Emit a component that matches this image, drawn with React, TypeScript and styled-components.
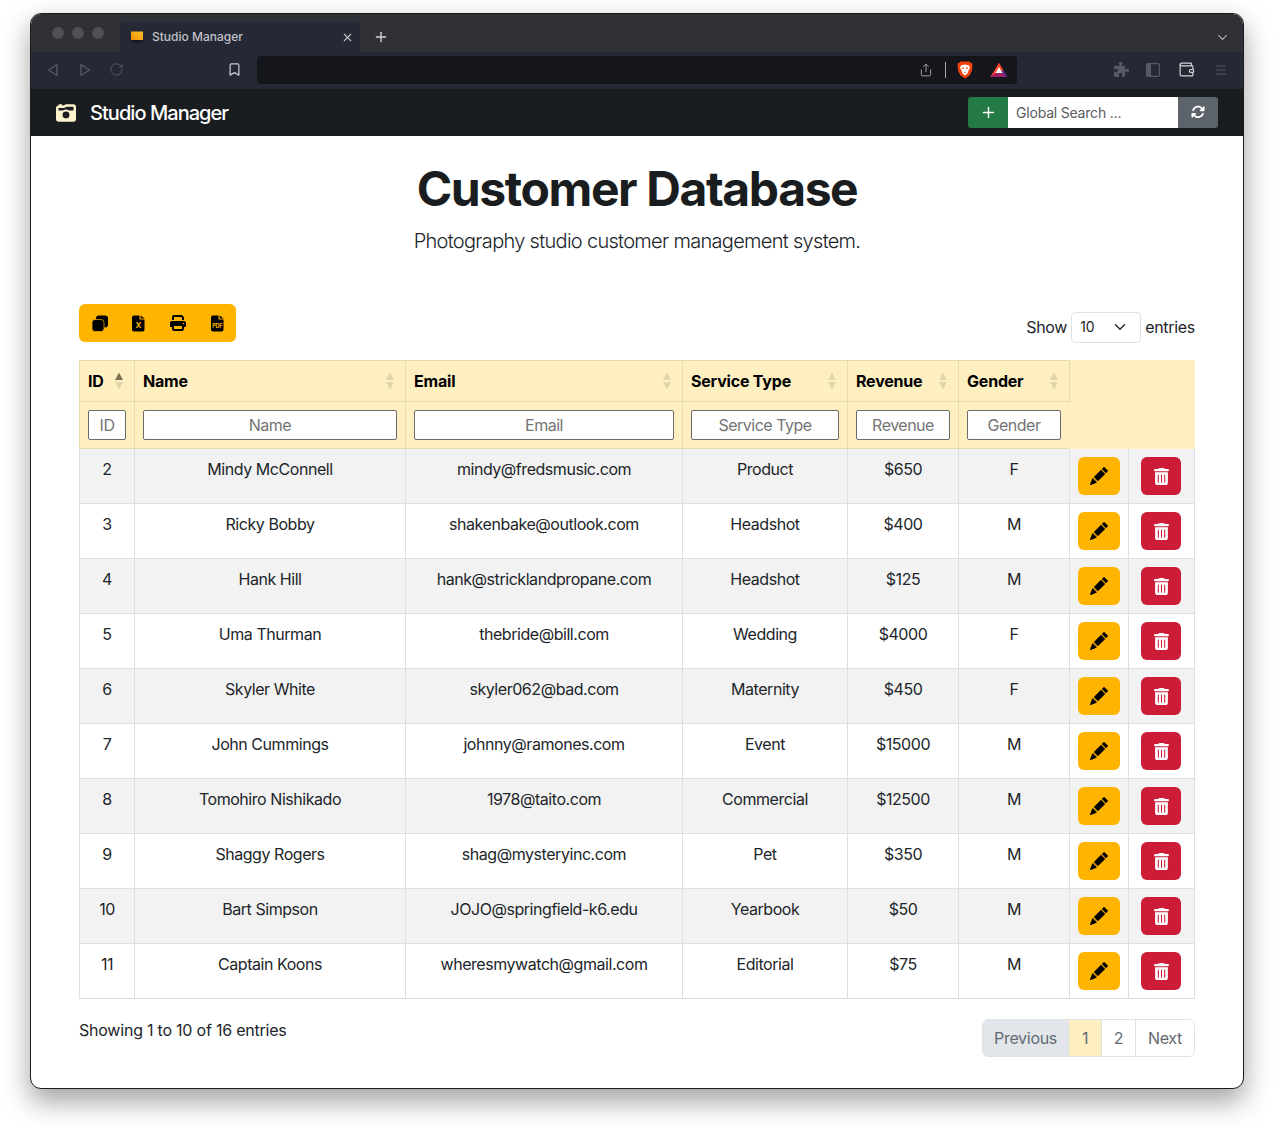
import React from 'react';
import styled, { createGlobalStyle } from 'styled-components';
import { FaArrowsRotate, FaCameraRetro, FaPrint, FaPuzzlePiece, FaTrashCan } from 'react-icons/fa6';
import { BsPencilFill } from 'react-icons/bs';
import { Bookmark, ChevronDown, Menu, Plus, RotateCw, Share, Wallet, X } from 'lucide-react';

type Customer = { id: number; name: string; email: string; service: string; revenue: string; gender: string };

const customers: Customer[] = [
  { id: 2, name: 'Mindy McConnell', email: 'mindy@fredsmusic.com', service: 'Product', revenue: '$650', gender: 'F' },
  { id: 3, name: 'Ricky Bobby', email: 'shakenbake@outlook.com', service: 'Headshot', revenue: '$400', gender: 'M' },
  { id: 4, name: 'Hank Hill', email: 'hank@stricklandpropane.com', service: 'Headshot', revenue: '$125', gender: 'M' },
  { id: 5, name: 'Uma Thurman', email: 'thebride@bill.com', service: 'Wedding', revenue: '$4000', gender: 'F' },
  { id: 6, name: 'Skyler White', email: 'skyler062@bad.com', service: 'Maternity', revenue: '$450', gender: 'F' },
  { id: 7, name: 'John Cummings', email: 'johnny@ramones.com', service: 'Event', revenue: '$15000', gender: 'M' },
  { id: 8, name: 'Tomohiro Nishikado', email: '1978@taito.com', service: 'Commercial', revenue: '$12500', gender: 'M' },
  { id: 9, name: 'Shaggy Rogers', email: 'shag@mysteryinc.com', service: 'Pet', revenue: '$350', gender: 'M' },
  { id: 10, name: 'Bart Simpson', email: 'JOJO@springfield-k6.edu', service: 'Yearbook', revenue: '$50', gender: 'M' },
  { id: 11, name: 'Captain Koons', email: 'wheresmywatch@gmail.com', service: 'Editorial', revenue: '$75', gender: 'M' },
];

const columns = [
  { label: 'ID', width: 55, active: true },
  { label: 'Name', width: 271 },
  { label: 'Email', width: 277 },
  { label: 'Service Type', width: 165 },
  { label: 'Revenue', width: 111 },
  { label: 'Gender', width: 111 },
];

const AMBER = '#ffb400';

const GlobalStyle = createGlobalStyle`
  html, body {
    margin: 0;
    background: #fff;
    font-family: Inter, "Liberation Sans", sans-serif;
    font-size: 16px;
    line-height: 24px;
    letter-spacing: -0.45px;
    color: #212529;
  }
`;

const Page = styled.div`
  height: 1129px;
  box-sizing: border-box;
  padding: 13px 30px 0;
  overflow: hidden;
`;

const Window = styled.div`
  height: 1076px;
  box-sizing: border-box;
  border: 1px solid #1c1c1e;
  border-radius: 11px;
  overflow: hidden;
  background: #fff;
  box-shadow: 0 12px 28px rgba(0, 0, 0, 0.38);
`;

const TabStrip = styled.div`
  height: 38px;
  background: #303136;
  display: flex;
  align-items: flex-end;
  padding-left: 21px;
`;

const Lights = styled.div`
  display: flex;
  gap: 8px;
  align-self: flex-start;
  margin-top: 13px;
  width: 68px;
`;

const Light = styled.span`
  width: 12px;
  height: 12px;
  border-radius: 50%;
  background: #505054;
`;

const Tab = styled.div`
  width: 240px;
  height: 30px;
  box-sizing: border-box;
  background: #252835;
  border-radius: 5px 5px 0 0;
  display: flex;
  align-items: center;
  padding: 0 6px 0 10px;
  color: #c0c1c6;
  font-size: 12px;
  font-weight: 500;
  letter-spacing: 0;
`;

const TabTitle = styled.span`
  flex: 1;
  margin-left: 8px;
`;

const NewTab = styled.div`
  display: flex;
  align-self: center;
  margin: 8px 0 0 13px;
  color: #d4d5d8;
`;

const StripEnd = styled.div`
  display: flex;
  margin-left: auto;
  align-self: center;
  margin-top: 8px;
  padding-right: 13px;
  color: #b4b5b9;
`;

const Toolbar = styled.div`
  height: 37px;
  background: #252835;
  display: flex;
  align-items: center;
  padding: 0 0 2px 16px;
  box-sizing: border-box;
  color: #565966;
`;

const ToolSlot = styled.div<{ $ml: number; $color?: string }>`
  display: flex;
  margin-left: ${(p) => p.$ml}px;
  color: ${(p) => p.$color ?? 'inherit'};
`;

const UrlBar = styled.div`
  width: 760px;
  height: 28px;
  margin-left: 15px;
  box-sizing: border-box;
  background: #15161b;
  border-radius: 4px;
  display: flex;
  align-items: center;
  justify-content: flex-end;
  padding-right: 9px;
  color: #a9aaae;
`;

const UrlDivider = styled.span`
  width: 1px;
  height: 16px;
  margin: 0 11px 0 12px;
  background: #a9aaae;
`;

const Navbar = styled.nav`
  height: 47px;
  background: #1a1d20;
  display: flex;
  align-items: center;
  justify-content: space-between;
  padding: 0 25px;
`;

const Brand = styled.div`
  display: flex;
  align-items: center;
  gap: 14px;
  color: #fff;
  font-size: 20px;
  font-weight: 500;
  letter-spacing: -0.95px;
  svg {
    color: #fff3cd;
  }
`;

const SearchGroup = styled.div`
  display: flex;
  height: 31px;
  margin-top: -1px;
`;

const SearchButton = styled.div<{ $bg: string; $side: 'left' | 'right' }>`
  width: 40px;
  display: flex;
  align-items: center;
  justify-content: center;
  color: #fff;
  background: ${(p) => p.$bg};
  border-radius: ${(p) => (p.$side === 'left' ? '3px 0 0 3px' : '0 3px 3px 0')};
`;

const SearchInput = styled.input`
  width: 170px;
  box-sizing: border-box;
  border: 0;
  padding: 0 8px;
  font: 14px Inter, "Liberation Sans", sans-serif;
  letter-spacing: -0.2px;
  outline: none;
  &::placeholder {
    color: #595c5f;
    opacity: 1;
  }
`;

const Content = styled.main`
  padding: 24px 48px 0;
`;

const Title = styled.h1`
  margin: 0;
  text-align: center;
  font-size: 48px;
  line-height: 58px;
  font-weight: 700;
  color: #1a1d20;
  letter-spacing: -1.4px;
`;

const Lead = styled.p`
  margin: 8px 0 0;
  text-align: center;
  font-size: 20px;
  line-height: 30px;
  font-weight: 300;
  letter-spacing: -0.7px;
`;

const TableTools = styled.div`
  display: flex;
  justify-content: space-between;
  align-items: flex-start;
  margin-top: 48px;
`;

const ExportGroup = styled.div`
  display: flex;
  width: 157px;
  height: 38px;
  background: ${AMBER};
  border-radius: 6px;
`;

const ExportButton = styled.div`
  flex: 1;
  display: flex;
  align-items: center;
  justify-content: center;
  padding-left: 2px;
  color: #000;
`;

const LengthControl = styled.div`
  display: flex;
  align-items: center;
  gap: 4px;
  margin-top: 8px;
  height: 30px;
  letter-spacing: -0.3px;
`;

const LengthSelect = styled.div`
  width: 70px;
  height: 31px;
  box-sizing: border-box;
  border: 1px solid #dee2e6;
  border-radius: 4px;
  display: flex;
  align-items: center;
  justify-content: space-between;
  padding: 0 11px 0 8px;
  font-size: 14px;
  letter-spacing: 0;
`;

const Table = styled.table`
  width: 1116px;
  margin-top: 18px;
  table-layout: fixed;
  border-collapse: collapse;
`;

const HeadCell = styled.th<{ $blank?: boolean }>`
  box-sizing: border-box;
  padding: 8px;
  background: #fdefc0;
  border: 1px solid ${(p) => (p.$blank ? '#fdefc0' : '#e6dbac')};
  color: #000;
  font-weight: 700;
  letter-spacing: -0.2px;
  text-align: left;
  vertical-align: middle;
`;

const HeadLabel = styled.div`
  display: flex;
  align-items: center;
  justify-content: space-between;
  padding-right: 3px;
`;

const FilterInput = styled.input`
  display: block;
  width: 100%;
  height: 30px;
  box-sizing: border-box;
  padding: 0 2px;
  border: 1px solid #6b6b6b;
  border-radius: 2px;
  background: #fff;
  font: 16px Inter, "Liberation Sans", sans-serif;
  letter-spacing: -0.5px;
  text-align: center;
  &::placeholder {
    color: #757575;
    opacity: 1;
  }
`;

const Row = styled.tr<{ $striped: boolean }>`
  background: ${(p) => (p.$striped ? '#f2f2f2' : '#fff')};
`;

const Cell = styled.td`
  box-sizing: border-box;
  height: 55px;
  padding: 8px;
  border: 1px solid #dcdfe3;
  text-align: center;
  vertical-align: top;
  color: #212529;
`;

const ActionButton = styled.div<{ $bg: string; $color: string; $w: number; $ml: number }>`
  width: ${(p) => p.$w}px;
  height: 38px;
  margin-left: ${(p) => p.$ml}px;
  border-radius: 6px;
  display: flex;
  align-items: center;
  justify-content: center;
  background: ${(p) => p.$bg};
  color: ${(p) => p.$color};
`;

const TableFooter = styled.div`
  display: flex;
  justify-content: space-between;
  align-items: flex-start;
  margin-top: 20px;
`;

const Info = styled.div`
  margin-top: -1px;
  letter-spacing: -0.22px;
`;

const Pagination = styled.div`
  display: flex;
  height: 38px;
  box-sizing: border-box;
  border: 1px solid #dee2e6;
  border-radius: 6px;
  overflow: hidden;
  letter-spacing: -0.3px;
`;

const PageItem = styled.div<{ $w: number; $kind?: 'disabled' | 'active' }>`
  width: ${(p) => p.$w}px;
  box-sizing: border-box;
  display: flex;
  align-items: center;
  justify-content: center;
  color: #626a72;
  background: ${(p) => (p.$kind === 'disabled' ? '#e2e6ea' : p.$kind === 'active' ? '#fdefc0' : '#fff')};
  & + & {
    border-left: 1px solid #dee2e6;
  }
`;

const SortArrows = ({ active }: { active?: boolean }) => (
  <svg width="8" height="18" viewBox="0 0 8 18" aria-hidden="true">
    <path d="M4 0.5 8 8H0Z" fill={active ? '#7a7152' : '#e0d6ab'} />
    <path d="M4 17.5 8 10H0Z" fill="#e0d6ab" />
  </svg>
);

const TabIcon = () => (
  <svg width="14" height="14" viewBox="0 0 14 14" aria-hidden="true">
    <defs>
      <linearGradient id="screen" x1="0" y1="1" x2="1" y2="0">
        <stop offset="0" stopColor="#f29400" />
        <stop offset="1" stopColor="#ffc02e" />
      </linearGradient>
    </defs>
    <rect x="1" y="1.5" width="12" height="8.5" fill="url(#screen)" />
    <rect x="1" y="10" width="12" height="1.5" fill="#15161b" />
    <rect x="4" y="12" width="6" height="1" fill="#15161b" />
  </svg>
);

const BackIcon = ({ flip }: { flip?: boolean }) => (
  <svg width="12" height="14" viewBox="0 0 12 14" fill="none" stroke="currentColor" strokeWidth="1.3" strokeLinejoin="round" aria-hidden="true">
    <path d={flip ? 'M2 1.5 10.5 7 2 12.5Z' : 'M10 1.5 1.5 7 10 12.5Z'} />
  </svg>
);

const BraveIcon = () => (
  <svg width="16" height="18" viewBox="0 0 16 18" aria-hidden="true">
    <path d="M3.5 0.5h9l1.5 1.5 1.5.5-.5 7-2.500 5-4.500 3-4.500-3-2.500-5-.5-7L2 2Z" fill="#f1420f" />
    <path d="M4 4.500 8 3.500l4 1 1 2-1.500 3-1 3L8 14.500 5.500 12.500l-1-3L3 6.500Z" fill="#fff" />
    <path d="M5 6.500h2l-.5 1.500H5.500ZM11 6.500H9l.5 1.500h1ZM7 11h2l-1 1.200Z" fill="#f1420f" />
  </svg>
);

const BatIcon = () => (
  <svg width="18" height="16" viewBox="0 0 18 16" aria-hidden="true">
    <path d="M9 1 17.500 15H0.500Z" fill="#662d91" />
    <path d="M9 1 0.500 15H5L9 6.500Z" fill="#ff4724" />
    <path d="M9 1 13.500 8.500H5Z" fill="#ff4724" />
    <path d="M9 5 12.500 11H5.500Z" fill="#fff" />
    <path d="M3 13 5.500 11H12.500L15 15H1Z" fill="#9e1f63" />
  </svg>
);

const PanelIcon = () => (
  <svg width="14" height="14" viewBox="0 0 14 14" fill="none" stroke="currentColor" strokeWidth="1.2" aria-hidden="true">
    <rect x="0.600" y="0.600" width="12.800" height="12.800" rx="1.500" />
    <rect x="1" y="1" width="4" height="12" fill="currentColor" stroke="none" />
  </svg>
);

const CopyIcon = () => (
  <svg width="16" height="17" viewBox="0 0 16 17" aria-hidden="true">
    <rect x="4" y="0.500" width="12" height="12" rx="3" fill="#000" />
    <rect x="0" y="4.500" width="12" height="12" rx="3" fill="#000" stroke={AMBER} strokeWidth="0.7" />
  </svg>
);

const FileIcon = ({ mark, size }: { mark: string; size: number }) => (
  <svg width="13" height="17" viewBox="0 0 13 17" aria-hidden="true">
    <path d="M2 0.500H7.500V4.500H12.500V14.500A2 2 0 0 1 10.500 16.500H2A2 2 0 0 1 0 14.500V2.500A2 2 0 0 1 2 0.500Z" fill="#000" />
    <path d="M8.700 0.500 12.500 3.400H8.700Z" fill="#000" />
    <text x="6.300" y="13" textAnchor="middle" fontFamily="Inter, sans-serif" fontWeight="700" fontSize={size} letterSpacing="-0.2" fill={AMBER}>
      {mark}
    </text>
  </svg>
);

const App: React.FC = () => (
  <>
    <GlobalStyle />
    <Page>
      <Window>
        <TabStrip>
          <Lights>
            <Light />
            <Light />
            <Light />
          </Lights>
          <Tab>
            <TabIcon />
            <TabTitle>Studio Manager</TabTitle>
            <X size={13} strokeWidth={2} />
          </Tab>
          <NewTab>
            <Plus size={16} strokeWidth={2} />
          </NewTab>
          <StripEnd>
            <ChevronDown size={15} strokeWidth={1.8} />
          </StripEnd>
        </TabStrip>

        <Toolbar>
          <ToolSlot $ml={0}>
            <BackIcon />
          </ToolSlot>
          <ToolSlot $ml={20}>
            <BackIcon flip />
          </ToolSlot>
          <ToolSlot $ml={18}>
            <RotateCw size={15} strokeWidth={1.6} />
          </ToolSlot>
          <ToolSlot $ml={103} $color="#c6c7cb">
            <Bookmark size={15} strokeWidth={2} />
          </ToolSlot>
          <UrlBar>
            <Share size={14} strokeWidth={1.6} />
            <UrlDivider />
            <BraveIcon />
            <ToolSlot $ml={17}>
              <BatIcon />
            </ToolSlot>
          </UrlBar>
          <ToolSlot $ml={97}>
            <FaPuzzlePiece size={15} />
          </ToolSlot>
          <ToolSlot $ml={17}>
            <PanelIcon />
          </ToolSlot>
          <ToolSlot $ml={18} $color="#d2d3d6">
            <Wallet size={17} strokeWidth={1.7} />
          </ToolSlot>
          <ToolSlot $ml={19}>
            <Menu size={14} strokeWidth={1.6} />
          </ToolSlot>
        </Toolbar>

        <Navbar>
          <Brand>
            <FaCameraRetro size={20} />
            Studio Manager
          </Brand>
          <SearchGroup>
            <SearchButton $bg="#247a45" $side="left">
              <Plus size={17} strokeWidth={2} />
            </SearchButton>
            <SearchInput placeholder="Global Search ..." />
            <SearchButton $bg="#5c636a" $side="right">
              <FaArrowsRotate size={14} />
            </SearchButton>
          </SearchGroup>
        </Navbar>

        <Content>
          <Title>Customer Database</Title>
          <Lead>Photography studio customer management system.</Lead>

          <TableTools>
            <ExportGroup>
              <ExportButton>
                <CopyIcon />
              </ExportButton>
              <ExportButton>
                <FileIcon mark="X" size={8} />
              </ExportButton>
              <ExportButton>
                <FaPrint size={16} />
              </ExportButton>
              <ExportButton>
                <FileIcon mark="PDF" size={5.5} />
              </ExportButton>
            </ExportGroup>
            <LengthControl>
              Show
              <LengthSelect>
                10
                <ChevronDown size={18} strokeWidth={1.8} />
              </LengthSelect>
              entries
            </LengthControl>
          </TableTools>

          <Table>
            <colgroup>
              {columns.map((c) => (
                <col key={c.label} style={{ width: c.width }} />
              ))}
              <col style={{ width: 59 }} />
              <col style={{ width: 66 }} />
            </colgroup>
            <thead>
              <tr>
                {columns.map((c) => (
                  <HeadCell key={c.label}>
                    <HeadLabel>
                      {c.label}
                      <SortArrows active={c.active} />
                    </HeadLabel>
                  </HeadCell>
                ))}
                <HeadCell $blank rowSpan={2} colSpan={2} />
              </tr>
              <tr>
                {columns.map((c) => (
                  <HeadCell key={c.label}>
                    <FilterInput placeholder={c.label} />
                  </HeadCell>
                ))}
              </tr>
            </thead>
            <tbody>
              {customers.map((c, i) => (
                <Row key={c.id} $striped={i % 2 === 0}>
                  <Cell>{c.id}</Cell>
                  <Cell>{c.name}</Cell>
                  <Cell>{c.email}</Cell>
                  <Cell>{c.service}</Cell>
                  <Cell>{c.revenue}</Cell>
                  <Cell>{c.gender}</Cell>
                  <Cell>
                    <ActionButton $bg={AMBER} $color="#000" $w={42} $ml={0}>
                      <BsPencilFill size={18} />
                    </ActionButton>
                  </Cell>
                  <Cell>
                    <ActionButton $bg="#cc1c38" $color="#fff" $w={40} $ml={4}>
                      <FaTrashCan size={17} />
                    </ActionButton>
                  </Cell>
                </Row>
              ))}
            </tbody>
          </Table>

          <TableFooter>
            <Info>Showing 1 to 10 of 16 entries</Info>
            <Pagination>
              <PageItem $w={85} $kind="disabled">Previous</PageItem>
              <PageItem $w={33} $kind="active">1</PageItem>
              <PageItem $w={34}>2</PageItem>
              <PageItem $w={59}>Next</PageItem>
            </Pagination>
          </TableFooter>
        </Content>
      </Window>
    </Page>
  </>
);

export default App;
